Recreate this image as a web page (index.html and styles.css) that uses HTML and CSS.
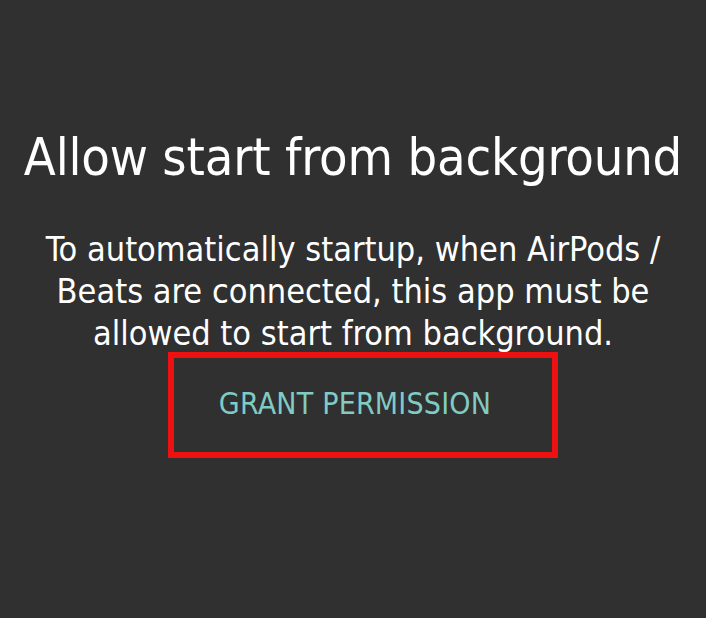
FILE: index.html
```html
<!DOCTYPE html>
<html lang="en">
<head>
    <meta charset="UTF-8">
    <meta name="viewport" content="width=device-width, initial-scale=1.0">
    <title>Allow start from background</title>
    <link rel="stylesheet" href="styles.css">
</head>
<body>

    <div class="screen">
        <h1 class="title">Allow start from background</h1>

        <p class="message">
            To automatically startup, when AirPods /<br>
            Beats are connected, this app must be<br>
            allowed to start from background.
        </p>

        <!-- marked area -->
        <div class="highlight">
            <button class="grant">GRANT PERMISSION</button>
        </div>
    </div>

</body>
</html>
```
FILE: styles.css
```css
body {
    margin: 0;
    background: #303030;
    font-family: "DejaVu Sans Condensed", "DejaVu Sans", sans-serif;
}
.screen {
    height: 618px;
    padding-top: 126px;
    box-sizing: border-box;
    display: flex;
    flex-direction: column;
    align-items: center;
}
.title {
    margin: 0;
    font-size: 52px;
    font-weight: normal;
    line-height: 62px;
    letter-spacing: -0.2px;
    color: #fff;
}
.message {
    margin: 40px 0 0;
    font-size: 34px;
    line-height: 42px;
    text-align: center;
    color: #fff;
}
.highlight {
    margin: -2px 0 0 20px;
    border: 6px solid #ee1111;
    padding: 28px 61px 31px 45px;
}
.grant {
    display: block;
    margin: 0;
    padding: 0;
    border: none;
    background: none;
    font-family: inherit;
    font-size: 30px;
    line-height: 35px;
    letter-spacing: 0.2px;
    color: #80cbc4;
}
```
